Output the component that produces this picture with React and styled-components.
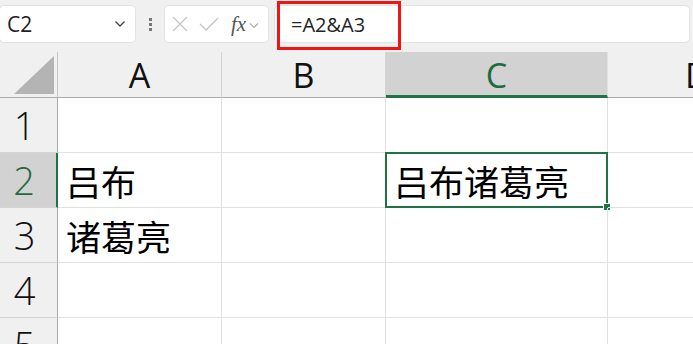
import React from "react";
import styled, { createGlobalStyle } from "styled-components";

const GlobalStyle = createGlobalStyle`
    html, body {
        margin: 0;
        padding: 0;
        background: #f0f0f0;
        overflow: hidden;
    }
    body {
        font-family: "Open Sans", "Noto Sans", "Noto Sans CJK SC", sans-serif;
    }
`;

const columns = ["A", "B", "C", "D"];
const rows = [
    { n: 1, cells: ["", "", "", ""] },
    { n: 2, cells: ["吕布", "", "吕布诸葛亮", ""] },
    { n: 3, cells: ["诸葛亮", "", "", ""] },
    { n: 4, cells: ["", "", "", ""] },
    { n: 5, cells: ["", "", "", ""] },
];
const activeCol = 2;
const activeRow = 2;

const App = () => {
    return (
        <>
            <GlobalStyle />
            <Page>
                <Toolbar>
                    <NameBox>
                        <NameText>C2</NameText>
                        <Chevron width="12" height="8" viewBox="0 0 12 8">
                            <path d="M1.5 1.5 L6 6 L10.5 1.5" fill="none" stroke="#444" strokeWidth="1.3" />
                        </Chevron>
                    </NameBox>
                    <Grip>
                        <span />
                        <span />
                        <span />
                    </Grip>
                    <FxBox>
                        <svg width="16" height="16" viewBox="0 0 16 16">
                            <path d="M1 1 L15 15 M15 1 L1 15" stroke="#c4c4c4" strokeWidth="1.3" fill="none" />
                        </svg>
                        <svg width="20" height="16" viewBox="0 0 20 16">
                            <path d="M1 8 L7 14 L19 2" stroke="#c4c4c4" strokeWidth="1.3" fill="none" />
                        </svg>
                        <FxText>fx</FxText>
                        <SmallChevron width="10" height="7" viewBox="0 0 10 7">
                            <path d="M1 1.5 L5 5.5 L9 1.5" fill="none" stroke="#b0b0b0" strokeWidth="1.2" />
                        </SmallChevron>
                    </FxBox>
                    <FormulaBar>
                        <FormulaText>=A2&amp;A3</FormulaText>
                        <Highlight />
                    </FormulaBar>
                </Toolbar>
                <Sheet>
                    <Corner>
                        <svg width="40" height="38" viewBox="0 0 40 38">
                            <path d="M40 0 L40 38 L0 38 Z" fill="#b4b4b4" />
                        </svg>
                    </Corner>
                    {columns.map((c, i) => (
                        <ColHeader key={c} $active={i === activeCol} $last={i === columns.length - 1}>
                            {c}
                        </ColHeader>
                    ))}
                    {rows.map((r) => (
                        <React.Fragment key={r.n}>
                            <RowHeader $active={r.n === activeRow}>{r.n}</RowHeader>
                            {r.cells.map((v, i) => (
                                <Cell key={i} $selected={r.n === activeRow && i === activeCol}>
                                    {v}
                                </Cell>
                            ))}
                        </React.Fragment>
                    ))}
                </Sheet>
            </Page>
        </>
    );
};

const Page = styled.div`
    width: 693px;
    height: 344px;
    overflow: hidden;
    background: #f0f0f0;
`;

const Toolbar = styled.div`
    display: flex;
    align-items: flex-start;
    height: 52px;
    padding-top: 5px;
    box-sizing: border-box;
`;

const NameBox = styled.div`
    display: flex;
    align-items: center;
    justify-content: space-between;
    width: 137px;
    height: 38px;
    margin-left: -1px;
    padding: 0 9px 0 7px;
    box-sizing: border-box;
    background: #fff;
    border: 1px solid #e3e3e3;
    border-radius: 5px;
`;

const NameText = styled.span`
    font-size: 21px;
    color: #222;
`;

const Chevron = styled.svg`
    display: block;
`;

const Grip = styled.div`
    display: flex;
    flex-direction: column;
    align-items: center;
    justify-content: center;
    gap: 2px;
    width: 28px;
    height: 38px;

    span {
        width: 3px;
        height: 3px;
        background: #777;
    }
`;

const FxBox = styled.div`
    display: flex;
    align-items: center;
    gap: 11px;
    width: 105px;
    height: 38px;
    padding-left: 7px;
    box-sizing: border-box;
    background: #fff;
    border: 1px solid #e3e3e3;
    border-radius: 5px;

    svg {
        display: block;
        flex-shrink: 0;
    }
`;

const FxText = styled.span`
    font-family: "Liberation Serif", "DejaVu Serif", serif;
    font-style: italic;
    font-size: 21px;
    color: #555;
    margin-left: 1px;
    margin-right: -8px;
`;

const SmallChevron = styled.svg`
    margin-top: 2px;
`;

const FormulaBar = styled.div`
    position: relative;
    display: flex;
    align-items: center;
    width: 416px;
    height: 38px;
    margin-left: 5px;
    padding-left: 16px;
    box-sizing: border-box;
    background: #fff;
    border: 1px solid #e3e3e3;
    border-radius: 5px;
`;

const FormulaText = styled.span`
    font-size: 20px;
    color: #222;
`;

const Highlight = styled.div`
    position: absolute;
    left: 2px;
    top: -5px;
    width: 124px;
    height: 49px;
    box-sizing: border-box;
    border: 3px solid #f01515;
`;

const Sheet = styled.div`
    display: grid;
    grid-template-columns: 58px 164px 164px 222px 120px;
    grid-template-rows: 46px repeat(5, 55px);
    background: #fff;
`;

const Corner = styled.div`
    display: flex;
    align-items: flex-end;
    justify-content: flex-end;
    padding: 0 3px 3px 0;
    background: #f0f0f0;
    border-right: 1px solid #c6c6c6;
    border-bottom: 1px solid #ababab;
`;

const ColHeader = styled.div`
    display: flex;
    align-items: center;
    font-size: 34px;
    line-height: 1;
    background: ${(p) => (p.$active ? "#d2d2d2" : "#f0f0f0")};
    color: ${(p) => (p.$active ? "#1e6b41" : "#111")};
    border-right: 1px solid ${(p) => (p.$active ? "#e0e0e0" : "#d4d4d4")};
    border-bottom: ${(p) => (p.$active ? "3px solid #217346" : "1px solid #ababab")};
    box-sizing: border-box;
    padding-top: ${(p) => (p.$active ? "2px" : "0")};
    justify-content: ${(p) => (p.$last ? "flex-start" : "center")};
    padding-left: ${(p) => (p.$last ? "77px" : "0")};
`;

const RowHeader = styled.div`
    display: flex;
    align-items: center;
    justify-content: center;
    font-size: 38px;
    font-weight: 300;
    line-height: 1;
    background: ${(p) => (p.$active ? "#d2d2d2" : "#f0f0f0")};
    color: ${(p) => (p.$active ? "#1e6b41" : "#111")};
    border-right: ${(p) => (p.$active ? "2px solid #217346" : "1px solid #ababab")};
    border-bottom: 1px solid #d4d4d4;
    box-sizing: border-box;
    padding-right: 8px;
`;

const Cell = styled.div`
    position: relative;
    display: flex;
    align-items: center;
    padding-left: 8px;
    font-family: "Noto Sans CJK SC", "Noto Sans", sans-serif;
    font-size: 35px;
    color: #000;
    border-right: 1px solid #e1e1e1;
    border-bottom: 1px solid #e1e1e1;
    box-sizing: border-box;
    white-space: nowrap;

    ${(p) =>
        p.$selected &&
        `
        &::before {
            content: "";
            position: absolute;
            left: -1px;
            top: -1px;
            right: -1px;
            bottom: -1px;
            border: 2px solid #217346;
        }
        &::after {
            content: "";
            position: absolute;
            right: -4px;
            bottom: -4px;
            width: 6px;
            height: 6px;
            background: #217346;
            border: 1px solid #fff;
        }
    `}
`;

export default App;
